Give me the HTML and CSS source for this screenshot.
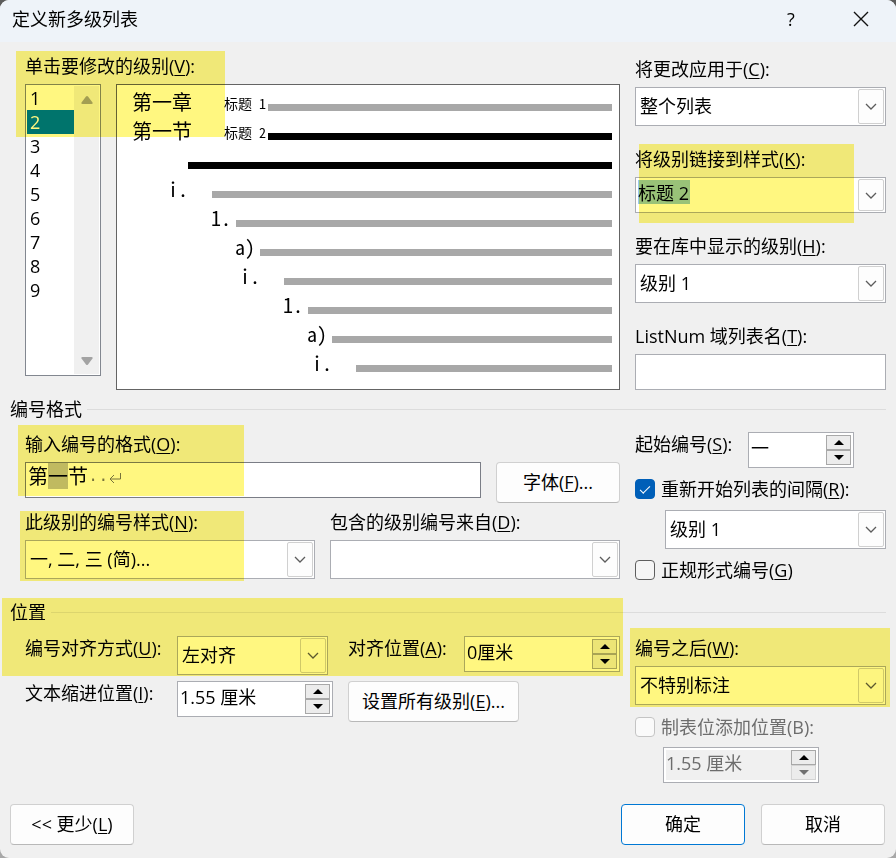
FILE: index.html
```html
<!DOCTYPE html>
<html lang="zh-CN">
<head>
<meta charset="utf-8">
<meta name="viewport" content="width=device-width, initial-scale=1">
<title>定义新多级列表</title>
<link rel="stylesheet" href="styles.css">
</head>
<body>
<svg class="defs" aria-hidden="true">
  <symbol id="chevron" viewBox="0 0 12 7"><path d="M1 1l5 5 5-5" fill="none" stroke="#5c5c5c" stroke-width="1.3"/></symbol>
  <symbol id="up" viewBox="0 0 10 5"><path d="M0 5L5 0l5 5z" fill="currentColor"/></symbol>
  <symbol id="down" viewBox="0 0 10 5"><path d="M0 0l5 5 5-5z" fill="currentColor"/></symbol>
</svg>
<form class="dialog">
  <header class="titlebar">
    <h1>定义新多级列表</h1>
    <button type="button" class="title-btn help" aria-label="帮助">?</button>
    <button type="button" class="title-btn" aria-label="关闭"><svg width="16" height="16" viewBox="0 0 16 16"><path d="M1 1l14 14M15 1L1 15" stroke="#111" stroke-width="1.4" fill="none"/></svg></button>
  </header>

  <main class="content">
    <section class="columns">
      <div class="main-col">
        <label class="label" for="level">单击要修改的级别(<u>V</u>):</label>
        <div class="pickers">
          <div class="listbox">
            <select id="level" size="12">
              <option>1</option><option selected>2</option><option>3</option><option>4</option><option>5</option><option>6</option><option>7</option><option>8</option><option>9</option>
            </select>
            <div class="scrollbar" aria-hidden="true">
              <svg width="12" height="10" viewBox="0 0 12 10"><path d="M5 1.500q1-1.200 2 0l4.500 6q.6 1.500-1 1.500h-9q-1.600 0-1-1.500z" fill="#a3a3a3"/></svg>
              <svg width="12" height="10" viewBox="0 0 12 10"><path d="M5 8.500q1 1.200 2 0l4.500-6q.6-1.500-1-1.500h-9q-1.600 0-1 1.500z" fill="#a3a3a3"/></svg>
            </div>
          </div>
          <div class="preview">
            <div class="line styled"><span class="num">第一章</span><span class="style-name">标题 1</span><i class="bar"></i></div>
            <div class="line styled current"><span class="num">第一节</span><span class="style-name">标题 2</span><i class="bar"></i></div>
            <div class="line current"><span class="num"></span><i class="bar"></i></div>
            <div class="line"><span class="num roman">i.</span><i class="bar"></i></div>
            <div class="line"><span class="num">1.</span><i class="bar"></i></div>
            <div class="line"><span class="num">a)</span><i class="bar"></i></div>
            <div class="line"><span class="num roman">i.</span><i class="bar"></i></div>
            <div class="line"><span class="num">1.</span><i class="bar"></i></div>
            <div class="line"><span class="num">a)</span><i class="bar"></i></div>
            <div class="line"><span class="num roman">i.</span><i class="bar"></i></div>
          </div>
        </div>
        <span class="marker marker-level"></span>
      </div>

      <div class="side-col fields">
        <div class="field">
          <label class="label" for="apply">将更改应用于(<u>C</u>):</label>
          <div class="combo"><select id="apply"><option>整个列表</option></select><span class="arrow"><svg><use href="#chevron"/></svg></span></div>
        </div>
        <div class="field">
          <label class="label" for="link">将级别链接到样式(<u>K</u>):</label>
          <div class="combo editable"><input id="link" type="text" role="combobox" aria-expanded="false" value="标题 2"><span class="arrow"><svg><use href="#chevron"/></svg></span></div>
          <span class="marker marker-link"></span>
        </div>
        <div class="field">
          <label class="label" for="gallery">要在库中显示的级别(<u>H</u>):</label>
          <div class="combo"><select id="gallery"><option>级别 1</option></select><span class="arrow"><svg><use href="#chevron"/></svg></span></div>
        </div>
        <div class="field">
          <label class="label" for="listnum">ListNum 域列表名(<u>T</u>):</label>
          <input class="textbox" id="listnum" type="text">
        </div>
      </div>
    </section>

    <h2>编号格式</h2>
    <section class="columns">
      <div class="main-col">
        <div class="format-row">
          <div class="field grow">
            <span class="label" id="format-label">输入编号的格式(<u>O</u>):</span>
            <div class="richtext" contenteditable="true" role="textbox" aria-labelledby="format-label" spellcheck="false">第<mark>一</mark>节<span class="hidden-mark">··<svg width="12" height="12" viewBox="0 0 12 12" aria-hidden="true"><path d="M11.500 1v6H1.500M5 3L1 7l4 4" fill="none" stroke="currentColor"/></svg></span></div>
            <span class="marker marker-format"></span>
          </div>
          <button type="button" class="btn">字体(<u>F</u>)...</button>
        </div>
        <div class="style-row">
          <div class="field grow">
            <label class="label" for="numstyle">此级别的编号样式(<u>N</u>):</label>
            <div class="combo"><select id="numstyle"><option>一, 二, 三 (简)...</option></select><span class="arrow"><svg><use href="#chevron"/></svg></span></div>
            <span class="marker marker-style"></span>
          </div>
          <div class="field grow">
            <label class="label" for="include">包含的级别编号来自(<u>D</u>):</label>
            <div class="combo"><select id="include"><option></option></select><span class="arrow"><svg><use href="#chevron"/></svg></span></div>
          </div>
        </div>
      </div>

      <div class="side-col numbering">
        <div class="inline">
          <label class="label start-label" for="start">起始编号(<u>S</u>):</label>
          <div class="spinner short"><input id="start" type="text" value="一"><span class="spin"><button type="button" aria-label="增加"><svg><use href="#up"/></svg></button><button type="button" aria-label="减少"><svg><use href="#down"/></svg></button></span></div>
        </div>
        <label class="check"><input type="checkbox" checked><span>重新开始列表的间隔(<u>R</u>):</span></label>
        <div class="combo indented"><select aria-label="重新开始列表的间隔"><option>级别 1</option></select><span class="arrow"><svg><use href="#chevron"/></svg></span></div>
        <label class="check"><input type="checkbox"><span>正规形式编号(<u>G</u>)</span></label>
      </div>
    </section>

    <h2 class="position-title">位置</h2>
    <section class="columns">
      <div class="main-col position">
        <label class="label" for="align">编号对齐方式(<u>U</u>):</label>
        <div class="cell">
          <div class="combo align-combo"><select id="align"><option>左对齐</option></select><span class="arrow"><svg><use href="#chevron"/></svg></span></div>
          <label class="label" for="alignat">对齐位置(<u>A</u>):</label>
          <div class="spinner push"><input id="alignat" type="text" value="0厘米"><span class="spin"><button type="button" aria-label="增加"><svg><use href="#up"/></svg></button><button type="button" aria-label="减少"><svg><use href="#down"/></svg></button></span></div>
        </div>
        <label class="label" for="indent">文本缩进位置(<u>I</u>):</label>
        <div class="cell">
          <div class="spinner"><input id="indent" type="text" value="1.55 厘米"><span class="spin"><button type="button" aria-label="增加"><svg><use href="#up"/></svg></button><button type="button" aria-label="减少"><svg><use href="#down"/></svg></button></span></div>
          <button type="button" class="btn wide">设置所有级别(<u>E</u>)...</button>
        </div>
        <span class="marker marker-position"></span>
      </div>

      <div class="side-col following">
        <div class="field">
          <label class="label" for="follow">编号之后(<u>W</u>):</label>
          <div class="combo"><select id="follow"><option>不特别标注</option></select><span class="arrow"><svg><use href="#chevron"/></svg></span></div>
          <span class="marker marker-follow"></span>
        </div>
        <label class="check disabled"><input type="checkbox" disabled><span>制表位添加位置(B):</span></label>
        <div class="spinner disabled"><input type="text" value="1.55 厘米" aria-label="制表位添加位置" disabled><span class="spin"><button type="button" aria-label="增加"><svg><use href="#up"/></svg></button><button type="button" aria-label="减少" disabled><svg><use href="#down"/></svg></button></span></div>
      </div>
    </section>
  </main>

  <footer class="actions">
    <button type="button" class="btn less">&lt;&lt; 更少(<u>L</u>)</button>
    <button type="submit" class="btn primary">确定</button>
    <button type="button" class="btn">取消</button>
  </footer>
</form>
</body>
</html>
```
FILE: styles.css
```css
*, *::before, *::after { box-sizing: border-box; }

body {
  margin: 0;
  min-height: 100vh;
  background: linear-gradient(#5c5c5c, #a8a8a8);
  color: #000;
  font: 18px/24px "Open Sans", "Noto Sans CJK SC", sans-serif;
}

.defs { position: absolute; width: 0; height: 0; }

input, select, button { font: inherit; color: inherit; margin: 0; }

u { text-underline-offset: 2px; text-decoration-thickness: 1px; }

.dialog {
  min-height: 100vh;
  display: flex;
  flex-direction: column;
  background: #f0f0f0;
  border-radius: 9px;
  overflow: hidden;
}

/* Title bar */
.titlebar {
  display: flex;
  align-items: center;
  height: 42px;
  padding: 0 0 4px 12px;
  background: #eef3f9;
}
.titlebar h1 { flex: 1; margin: 0; font-size: 18px; font-weight: 400; }
.title-btn {
  display: grid;
  place-items: center;
  width: 70px;
  height: 38px;
  padding: 0;
  border: 0;
  background: none;
}

/* Layout */
.content { padding: 13px 10px 0; }
.columns { display: flex; gap: 15px; }
.main-col { position: relative; flex: 1; min-width: 0; margin-left: 15px; }
.side-col { flex: none; width: 251px; }
.label { display: block; padding-bottom: 2px; line-height: 22px; white-space: nowrap; }
.field { position: relative; display: flex; flex-direction: column; gap: 5px; }
.grow { flex: 1; min-width: 0; }
.fields { display: flex; flex-direction: column; gap: 22px; padding-top: 3px; }

h2 {
  display: flex;
  align-items: center;
  gap: 5px;
  margin: 7px 0 11px;
  font-size: 18px;
  font-weight: 400;
}
h2::after { content: ""; flex: 1; border-top: 1px solid #dcdcdc; }
.position-title { margin-top: 18px; margin-bottom: 12px; }

/* Level list */
.pickers { display: flex; align-items: flex-start; gap: 15px; margin-top: 5px; }
.listbox {
  display: flex;
  width: 76px;
  height: 292px;
  padding: 1px;
  border: 1px solid #828790;
  background: #fff;
}
.listbox select {
  flex: 1;
  min-width: 0;
  height: 100%;
  padding: 0;
  border: 0;
  border-radius: 0;
  outline: 0;
  background: #fff;
  overflow: hidden;
  scrollbar-width: none;
}
.listbox option { height: 24px; min-height: 24px; padding: 0 3px; line-height: 24px; color: #000; }
.listbox option:checked {
  background: #0078d7 linear-gradient(#0078d7, #0078d7);
  color: #fff;
  -webkit-text-fill-color: #fff;
}
.scrollbar {
  display: flex;
  flex-direction: column;
  justify-content: space-between;
  align-items: center;
  width: 25px;
  padding: 9px 0 8px;
  background: #f0f0f0;
}

/* Preview */
.preview {
  flex: 1;
  min-width: 0;
  padding: 3px 7px 11px 0;
  border: 1px solid #646464;
  background: #fff;
  font-family: "Noto Sans CJK SC", sans-serif;
  font-feature-settings: "hwid";
}
.line { --start: 71px; display: flex; align-items: center; height: 29px; }
.line:nth-child(4) { --start: 95px; }
.line:nth-child(5) { --start: 119px; }
.line:nth-child(6) { --start: 143px; }
.line:nth-child(7) { --start: 167px; }
.line:nth-child(8) { --start: 191px; }
.line:nth-child(9) { --start: 215px; }
.line:nth-child(10) { --start: 239px; }
.num { width: var(--start); padding: 0 5px 2px 0; font-size: 20px; text-align: right; white-space: nowrap; }
.roman { padding-right: 24px; }
.styled .num { width: 107px; padding: 0 0 2px 15px; text-align: left; }
.style-name { width: 44px; font-size: 14px; line-height: 20px; white-space: nowrap; }
.bar { flex: 1; height: 7px; margin-top: 10px; background: #a8a8a8; }
.current .bar { background: #000; }

/* Controls */
.combo { position: relative; height: 39px; border: 1px solid #abadb3; background: #fff; }
.combo select, .combo input {
  display: block;
  width: 100%;
  height: 100%;
  padding: 0 30px 2px 4px;
  border: 0;
  border-radius: 0;
  background: none;
  appearance: none;
}
.combo.editable { height: 36px; }
.combo.editable input {
  padding: 0 30px 6px 2px;
  background: linear-gradient(#99c9ef, #99c9ef) 2px 2px / 52px 24px no-repeat;
}
.arrow {
  position: absolute;
  top: 1px;
  right: 1px;
  bottom: 1px;
  width: 26px;
  display: grid;
  place-items: center;
  border: 1px solid #d0d0d0;
  border-radius: 2px;
  background: #fdfdfd;
  pointer-events: none;
}
.arrow svg { width: 12px; height: 7px; }

.textbox { width: 100%; height: 36px; padding: 0 3px; border: 1px solid #abadb3; background: #fff; }

.richtext {
  height: 36px;
  padding: 0 2px;
  border: 1px solid #7a7d86;
  background: #fff;
  font: 20px/26px "Noto Sans CJK SC", sans-serif;
  white-space: nowrap;
  overflow: hidden;
  outline: 0;
}
.richtext mark { display: inline-block; height: 26px; background: #c0c0c0; color: inherit; }
.hidden-mark { color: #777; font-family: "Liberation Mono", monospace; font-size: 17px; }
.hidden-mark svg { margin-left: 1px; }

.spinner { display: flex; width: 156px; height: 36px; padding: 2px; border: 1px solid #abadb3; background: #fff; }
.spinner.short { width: 106px; }
.spinner input { flex: 1; min-width: 0; height: 100%; padding: 0 0 6px; border: 0; background: none; }
.spin { display: flex; flex-direction: column; width: 25px; }
.spin button {
  flex: 1;
  display: grid;
  place-items: center;
  min-height: 0;
  padding: 0;
  border: 1px solid #a8a8a8;
  border-radius: 0;
  background: #ececec;
}
.spin svg { width: 10px; height: 5px; }
.spin button:disabled { border-color: #d4d4d4; color: #707070; }

.btn {
  flex: none;
  width: 124px;
  height: 41px;
  padding: 0 0 2px;
  border: 1px solid #d0d0d0;
  border-bottom-color: #b8b8b8;
  border-radius: 4px;
  background: #fdfdfd;
  white-space: nowrap;
}
.btn.wide { width: 171px; }
.btn.primary { border-color: #0078d4; }

.check { display: flex; align-items: center; gap: 6px; height: 24px; white-space: nowrap; }
.check input {
  appearance: none;
  flex: none;
  width: 20px;
  height: 20px;
  border: 1px solid #5e5e5e;
  border-radius: 4px;
  background: #f5f5f5;
}
.check input:checked { display: grid; place-items: center; border-color: #005fb8; background: #005fb8; }
.check input:checked::before {
  content: "";
  width: 10px;
  height: 5px;
  margin-bottom: 2px;
  border: solid #fff;
  border-width: 0 0 1px 1px;
  transform: rotate(-45deg);
}

/* Number format */
.format-row { display: flex; align-items: flex-end; gap: 15px; padding-top: 1px; }
.format-row .field { padding-bottom: 5px; }
.style-row { display: flex; gap: 15px; margin-top: 8px; }
.numbering { display: flex; flex-direction: column; gap: 9px; }
.inline { display: flex; align-items: flex-start; }
.start-label { width: 113px; padding: 1px 0; }
.indented { margin-left: 30px; }

/* Position */
.position { display: grid; grid-template-columns: 137px 1fr; column-gap: 15px; row-gap: 6px; align-content: start; }
.position .label { padding: 1px 0; }
.cell { display: flex; align-items: flex-start; gap: 15px; }
.align-combo { flex: none; width: 151px; margin-right: 5px; }
.push { margin-left: auto; }
.following .field { padding-top: 1px; }
.following .check { margin: 10px 0 8px; }
.following .spinner { margin-left: 28px; }
.check.disabled { color: #6d6d6d; }
.check.disabled input { border-color: #c4c4c4; background: #fafafa; }
.spinner.disabled input { background: #f0f0f0; color: #6d6d6d; }

/* Highlighter strokes laid over the form */
.marker { position: absolute; background: #fff780; mix-blend-mode: multiply; pointer-events: none; }
.marker-level { top: -4px; left: -9px; width: 209px; height: 86px; }
.marker-link { top: -4px; left: 4px; width: 215px; height: 79px; }
.marker-format { top: -8px; left: -7px; width: 226px; height: 71px; }
.marker-style { top: 0; left: -5px; width: 224px; height: 70px; }
.marker-position { top: -38px; left: -23px; right: -3px; height: 78px; }
.marker-follow { top: -8px; left: -5px; right: -4px; height: 79px; }

.actions { display: flex; gap: 16px; padding: 21px 11px 13px 10px; }
.less { margin-right: auto; }
```
